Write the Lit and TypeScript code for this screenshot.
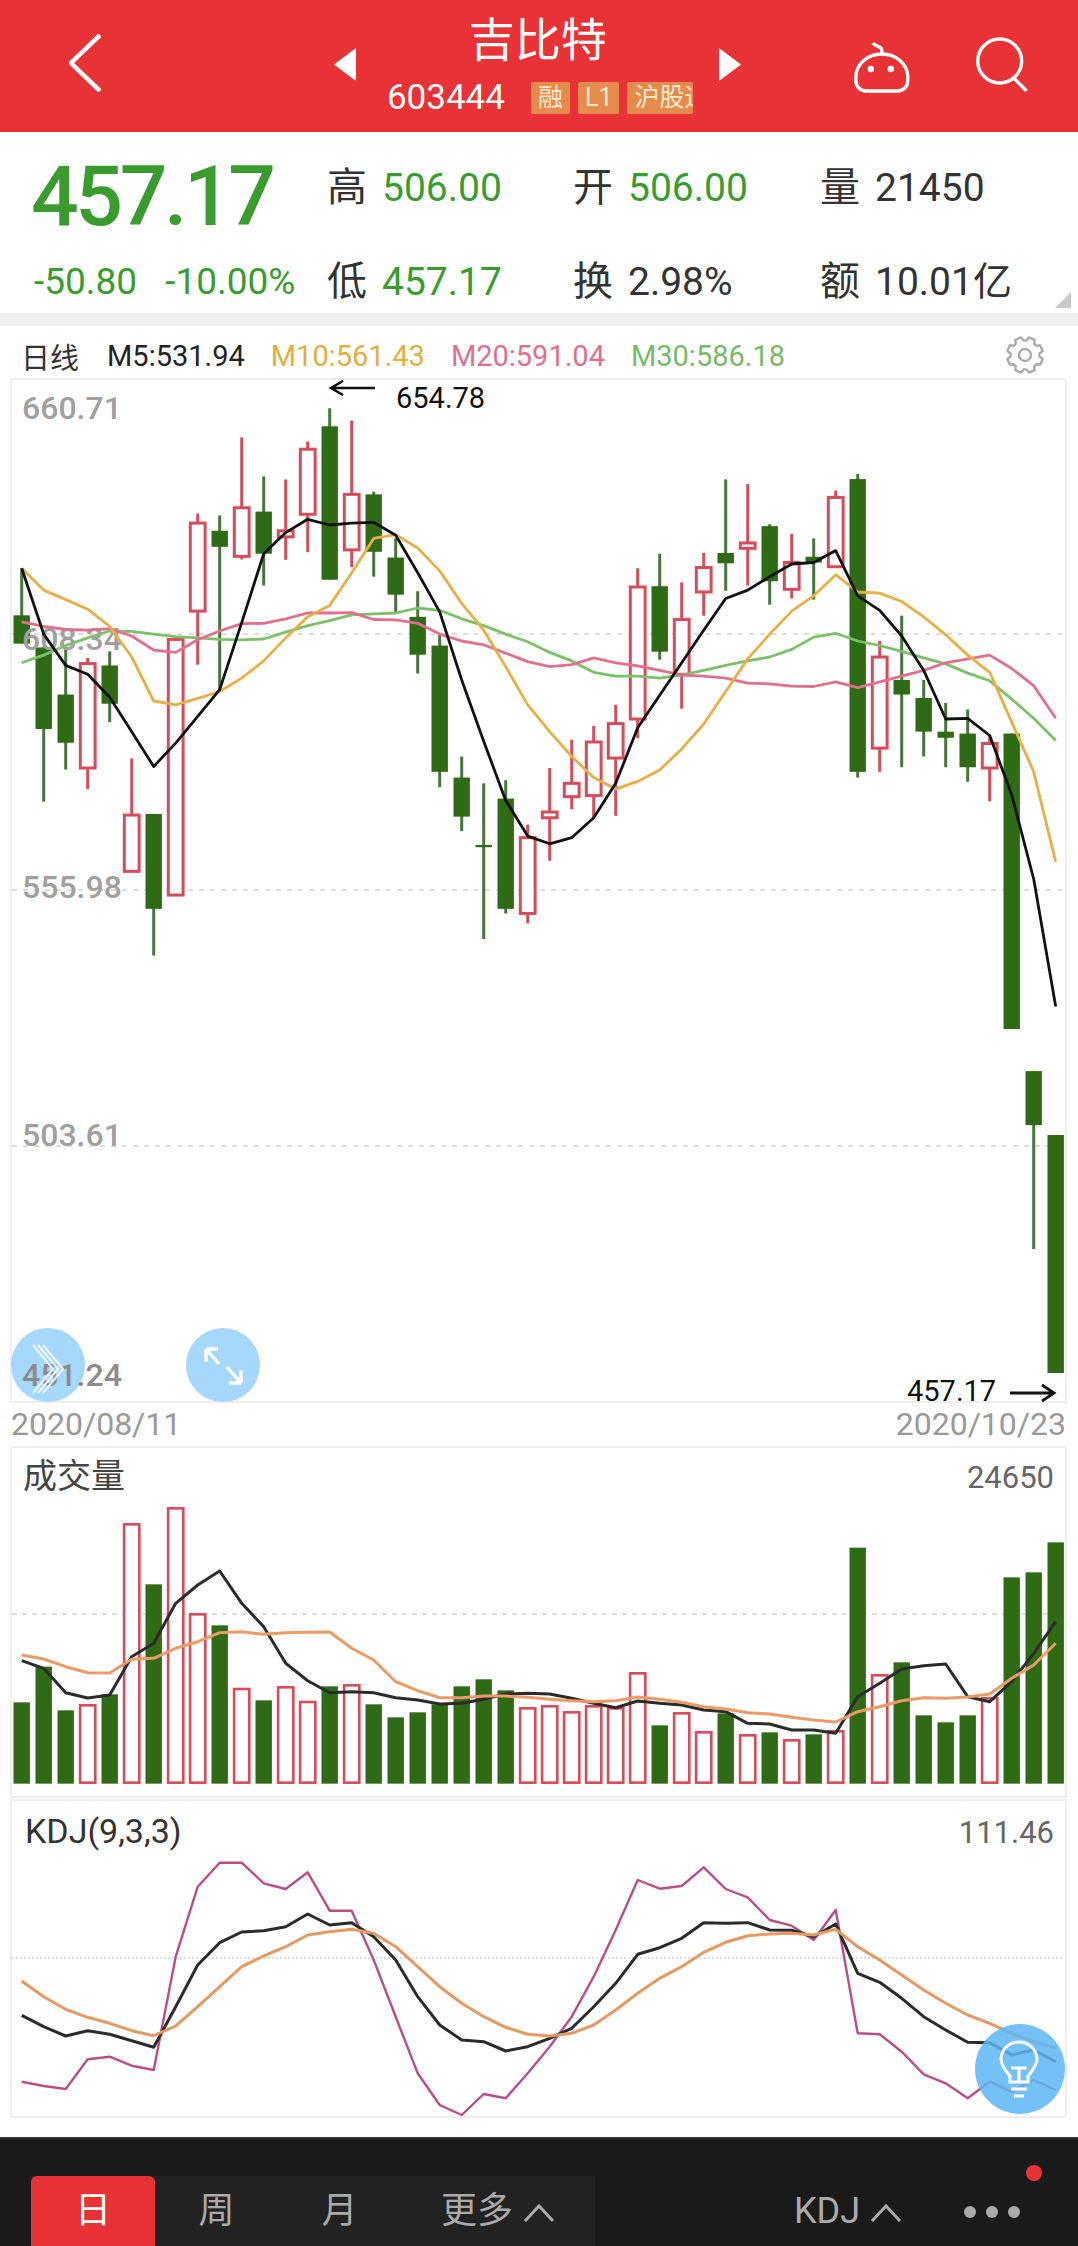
// app.ts - stock candlestick detail screen
import { LitElement, html, css, svg, unsafeCSS } from 'lit';
import { customElement } from 'lit/decorators.js';

const FONT = unsafeCSS(`Roboto, "Noto Sans CJK SC", sans-serif`);

const GREEN = '#2f6a15';
const WICK = '#47753a';
const RED = '#d64c5b';

// candle slot i sits at this page x
const slotX = (i: number) => 21.7 + 22 * i;

// values below were read off the reference, in units of 1/2.613 px from y=370
const py = (v: number) => 370 + v / 2.613;

type Candle = [up: 0 | 1, wickTop: number, top: number, bottom: number, wickBottom: number];

const CANDLES: Candle[] = [
  [0, 518, 641, 715, 715],
  [0, 725, 725, 938, 1128],
  [0, 730, 848, 974, 1044],
  [1, 752, 767, 1040, 1095],
  [0, 735, 772, 872, 920],
  [1, 1015, 1163, 1310, 1310],
  [0, 1160, 1160, 1408, 1530],
  [1, 704, 704, 1372, 1372],
  [1, 375, 400, 630, 770],
  [0, 380, 420, 462, 840],
  [1, 176, 360, 487, 495],
  [0, 278, 370, 480, 563],
  [1, 286, 420, 436, 496],
  [1, 187, 207, 377, 476],
  [0, 100, 147, 548, 548],
  [1, 132, 325, 470, 515],
  [0, 318, 325, 475, 540],
  [0, 440, 490, 587, 633],
  [0, 578, 645, 744, 793],
  [0, 690, 720, 1050, 1090],
  [0, 1010, 1065, 1167, 1205],
  [0, 1080, 1241, 1247, 1487],
  [0, 1072, 1120, 1408, 1420],
  [1, 1188, 1222, 1420, 1446],
  [1, 1040, 1155, 1170, 1282],
  [1, 966, 1080, 1115, 1148],
  [1, 930, 972, 1112, 1170],
  [1, 875, 924, 1014, 1165],
  [1, 518, 567, 912, 962],
  [0, 480, 565, 736, 757],
  [1, 555, 652, 795, 885],
  [1, 478, 516, 580, 642],
  [0, 286, 478, 505, 577],
  [1, 298, 452, 466, 563],
  [0, 403, 408, 552, 613],
  [1, 428, 503, 573, 597],
  [0, 440, 488, 503, 600],
  [1, 315, 333, 514, 514],
  [0, 272, 285, 1050, 1065],
  [1, 708, 750, 988, 1050],
  [0, 642, 810, 848, 1038],
  [0, 810, 857, 945, 1010],
  [0, 870, 945, 961, 1038],
  [0, 887, 950, 1038, 1076],
  [1, 955, 976, 1040, 1127],
  [0, 950, 950, 1722, 1722],
  [0, 1832, 1832, 1973, 2297],
  [0, 1999, 1999, 2621, 2621]
];

const MA5 = [
  518, 690, 772, 795, 855, 945, 1036, 975, 905, 835, 660, 480, 425, 390, 405, 400, 398, 432, 530,
  632, 810, 970, 1125, 1218, 1238, 1222, 1170, 1080, 935, 850, 765, 680, 597, 575, 540, 507, 503,
  472, 590, 628, 695, 785, 912, 910, 955, 1110, 1330, 1663
];
const MA10 = [
  518, 575, 600, 625, 670, 750, 865, 875, 858, 840, 805, 760, 700, 645, 615, 530, 440, 430, 465,
  525, 610, 680, 775, 875, 945, 1010, 1065, 1095, 1075, 1045, 990, 925, 840, 755, 690, 630, 590,
  535, 580, 583, 605, 645, 692, 745, 790, 920, 1050, 1285
];
const MA20 = [
  658, 670, 678, 680, 676, 695, 732, 738, 705, 682, 663, 662, 650, 635, 635, 634, 652, 653, 662,
  690, 708, 718, 740, 762, 775, 770, 752, 765, 773, 785, 797, 800, 805, 818, 820, 826, 827, 815,
  830, 815, 800, 785, 765, 755, 745, 780, 825, 910
];
const MA30 = [
  765, 745, 720, 700, 682, 683, 690, 697, 700, 704, 705, 703, 685, 668, 655, 640, 637, 635, 622,
  628, 650, 668, 690, 710, 738, 760, 790, 800, 800, 805, 797, 785, 772, 760, 750, 730, 698, 688,
  708, 720, 735, 752, 768, 792, 812, 860, 910, 968
];

// volume panel: units of 1/3 px from y=1440
const vy = (v: number) => 1440 + v / 3;

const VOLUME: [0 | 1, number][] = [
  [0, 787], [0, 680], [0, 811], [1, 796], [0, 763], [1, 253], [0, 433], [1, 205],
  [1, 523], [0, 556], [1, 747], [0, 781], [1, 742], [1, 786], [0, 739], [1, 736],
  [0, 793], [0, 832], [0, 817], [0, 793], [0, 739], [0, 718], [0, 751], [1, 805],
  [1, 799], [1, 817], [1, 799], [1, 805], [1, 700], [0, 856], [1, 820], [1, 877],
  [0, 820], [1, 886], [0, 877], [1, 901], [0, 883], [1, 874], [0, 323], [1, 706],
  [0, 667], [0, 826], [0, 847], [0, 826], [1, 775], [0, 412], [0, 397], [0, 307]
];
const VOL_BLACK = [
  662, 685, 758, 774, 765, 650, 610, 490, 435, 393, 490, 560, 670, 722, 758, 755, 758, 773, 780,
  792, 790, 778, 762, 760, 762, 775, 790, 803, 783, 790, 795, 810, 815, 850, 852, 870, 870, 880,
  770, 730, 687, 677, 672, 770, 785, 725, 640, 545
];
const VOL_ORANGE = [
  645, 657, 680, 698, 699, 658, 655, 625, 605, 578, 575, 583, 578, 577, 576, 625, 660, 725, 752,
  773, 773, 768, 768, 772, 778, 782, 785, 782, 771, 778, 787, 800, 807, 818, 822, 832, 840, 846,
  815, 800, 782, 773, 775, 771, 762, 715, 675, 610
];

// KDJ panel: units of 1/3 px from y=1790
const ky = (v: number) => 1790 + v / 3;

const KDJ_K = [
  676, 710, 738, 722, 733, 752, 772, 650, 525, 458, 426, 422, 410, 372, 405, 398, 440, 510, 620,
  705, 750, 755, 783, 770, 745, 715, 650, 580, 493, 473, 445, 398, 400, 398, 420, 421, 440, 402,
  550, 577, 625, 680, 720, 757, 758, 795, 780, 815
];
const KDJ_D = [
  573, 620, 658, 682, 700, 722, 737, 708, 650, 590, 530, 498, 470, 435, 425, 418, 430, 470, 530,
  590, 640, 680, 712, 733, 738, 730, 705, 660, 610, 565, 530, 487, 457, 437, 432, 430, 435, 418,
  470, 510, 555, 600, 640, 675, 700, 730, 755, 775
];
const KDJ_J = [
  875, 888, 897, 808, 800, 827, 840, 500, 290, 218, 218, 280, 297, 247, 362, 362, 510, 680, 850,
  945, 975, 912, 925, 850, 770, 680, 560, 420, 270, 296, 288, 232, 297, 322, 390, 407, 450, 360,
  730, 733, 785, 853, 880, 925, 875, 905, 870, 900
];

const line = (values: number[], map: (v: number) => number, color: string, width = 2.8) =>
  svg`<polyline
    points=${values.map((v, i) => `${slotX(i)},${map(v).toFixed(1)}`).join(' ')}
    fill="none"
    stroke=${color}
    stroke-width=${width}
    stroke-linejoin="round"
  />`;

// eight toothed outline around (19,19)
const gearPath = () => {
  const pts: string[] = [];
  for (let i = 0; i < 8; i++) {
    const a = (i * Math.PI) / 4 + Math.PI / 8;
    for (const [da, r] of [
      [-0.3, 14.5],
      [-0.17, 18],
      [0.17, 18],
      [0.3, 14.5]
    ]) {
      pts.push(`${(19 + r * Math.cos(a + da)).toFixed(1)} ${(19 + r * Math.sin(a + da)).toFixed(1)}`);
    }
  }
  return `M${pts.join('L')}Z`;
};

@customElement('candle-chart')
export class CandleChart extends LitElement {
  static override styles = css`
    :host {
      display: block;
      height: 1025px;
    }
    svg {
      display: block;
      font-family: ${FONT};
    }
    .price {
      font-size: 32px;
      font-weight: 500;
      fill: #a0a0a0;
    }
    .price.low {
      fill: #8c8c8c;
    }
    .mark {
      font-size: 29px;
      fill: #111;
    }
  `;

  private renderCandle(c: Candle, i: number) {
    const [up, wickTop, top, bottom, wickBottom] = c;
    const x = slotX(i);
    const h = Math.max(py(bottom) - py(top), 2);
    const stroke = up ? RED : WICK;
    return svg`
      <line x1=${x} x2=${x} y1=${py(wickTop)} y2=${py(wickBottom)} stroke=${stroke} stroke-width="3" />
      ${up
        ? svg`<rect x=${x - 7.4} y=${py(top)} width="14.8" height=${h} fill="#fff" stroke=${RED} stroke-width="3" />`
        : svg`<rect x=${x - 8.2} y=${py(top)} width="16.4" height=${h} fill=${GREEN} />`}
    `;
  }

  override render() {
    return html`
      <svg width="1078" height="1025" viewBox="0 378 1078 1025">
        <rect x="11" y="379" width="1055" height="1023" fill="#fff" stroke="#eee" stroke-width="2" />
        ${[634, 890, 1146].map(
          y => svg`<line x1="12" x2="1064" y1=${y} y2=${y} stroke="#ddd" stroke-width="2" stroke-dasharray="5 6" />`
        )}
        ${CANDLES.map((c, i) => this.renderCandle(c, i))}
        <text class="price" x="22" y="419">660.71</text>
        <text class="price" x="22" y="650">608.34</text>
        <text class="price" x="22" y="898">555.98</text>
        <text class="price" x="22" y="1146">503.61</text>
        ${line(MA30, py, '#7cc06a')}
        ${line(MA20, py, '#e26f8e')}
        ${line(MA10, py, '#e8b044')}
        ${line(MA5, py, '#111')}
        <path d="M375 388H331M343 381l-12 7 12 7" fill="none" stroke="#111" stroke-width="2.6" />
        <text class="mark" x="396" y="408">654.78</text>
        <text class="mark" x="907" y="1401">457.17</text>
        <path d="M1010 1393H1054M1042 1385l12 8-12 8" fill="none" stroke="#111" stroke-width="2.8" />

        <circle cx="48" cy="1365" r="37" fill="#a6d8fb" />
        <text class="price low" x="22" y="1386">451.24</text>
        <path
          d="M33 1345l20 24-20 24M38 1345l20 24-20 24M43 1345l20 24-20 24"
          fill="none"
          stroke="#fff"
          stroke-opacity="0.85"
          stroke-width="2"
        />
        <circle cx="223" cy="1365" r="37" fill="#a6d8fb" />
        <path
          d="M206 1349l13 15M206 1349v13M206 1349h12M241 1383l-14-16M241 1383v-13M241 1383h-12"
          fill="none"
          stroke="#fff"
          stroke-width="3.4"
        />
      </svg>
    `;
  }
}

@customElement('volume-chart')
export class VolumeChart extends LitElement {
  static override styles = css`
    :host {
      display: block;
      height: 352px;
    }
    svg {
      display: block;
      font-family: ${FONT};
    }
    .title {
      font-size: 34px;
      fill: #444;
    }
    .max {
      font-size: 31px;
      fill: #666;
    }
  `;

  override render() {
    const base = vy(1028);
    return html`
      <svg width="1078" height="352" viewBox="0 1446 1078 352">
        <rect x="11" y="1447" width="1055" height="350" fill="#fff" stroke="#eee" stroke-width="2" />
        <line x1="12" x2="1064" y1="1614" y2="1614" stroke="#ddd" stroke-width="2" stroke-dasharray="5 5" />
        ${VOLUME.map(([up, top], i) => {
          const x = slotX(i);
          const y = vy(top);
          return up
            ? svg`<rect x=${x - 7.6} y=${y} width="15.2" height=${base - y} fill="#fff" stroke=${RED} stroke-width="2.6" />`
            : svg`<rect x=${x - 8.2} y=${y} width="16.4" height=${base - y + 1} fill=${GREEN} />`;
        })}
        ${line(VOL_BLACK, vy, '#2b2b2b', 3)}
        ${line(VOL_ORANGE, vy, '#ec9a68', 3)}
        <text class="title" x="23" y="1488">成交量</text>
        <text class="max" x="1054" y="1488" text-anchor="end">24650</text>
      </svg>
    `;
  }
}

@customElement('kdj-chart')
export class KdjChart extends LitElement {
  static override styles = css`
    :host {
      display: block;
      height: 319px;
    }
    svg {
      display: block;
      font-family: ${FONT};
    }
    .title {
      font-size: 34px;
      fill: #333;
    }
    .max {
      font-size: 31px;
      fill: #666;
    }
  `;

  override render() {
    return html`
      <svg width="1078" height="319" viewBox="0 1799 1078 319">
        <rect x="11" y="1800" width="1055" height="317" fill="#fff" stroke="#eee" stroke-width="2" />
        <line x1="12" x2="1064" y1="1958" y2="1958" stroke="#ddd" stroke-width="2" stroke-dasharray="2 2" />
        ${line(KDJ_J, ky, '#b84f86', 2.4)}
        ${line(KDJ_K, ky, '#2b2b2b', 3)}
        ${line(KDJ_D, ky, '#e59a63', 3)}
        <text class="title" x="25" y="1843">KDJ(9,3,3)</text>
        <text class="max" x="1054" y="1843" text-anchor="end">111.46</text>
        <circle cx="1020" cy="2069" r="45" fill="#5cb6f6" fill-opacity="0.85" />
        <path
          d="M1010 2082v-6C1006 2071 1001 2066 1001 2059a18 17 0 0 1 36 0C1037 2066 1032 2071 1028 2076v6ZM1011 2068h16M1019 2068v14M1011 2089h16M1014 2096h10"
          fill="none"
          stroke="#fff"
          stroke-width="3"
        />
      </svg>
    `;
  }
}

@customElement('app-root')
export class AppRoot extends LitElement {
  static override styles = css`
    :host {
      display: block;
      width: 1078px;
      height: 2246px;
      overflow: hidden;
      background: #fff;
      font-family: ${FONT};
    }

    .header {
      display: flex;
      height: 132px;
      background: #e93235;
      color: #fff;
    }
    .back {
      display: block;
      margin: 34px 233px 0 69px;
    }
    .switch {
      display: block;
      margin-top: 48px;
    }
    .identity {
      width: 364px;
      padding-top: 14px;
      box-sizing: border-box;
    }
    .name {
      font-size: 46px;
      line-height: 52px;
      text-align: center;
    }
    .sub {
      display: flex;
      align-items: center;
      height: 32px;
      margin-top: 16px;
      padding-left: 31px;
    }
    .code {
      width: 144px;
      font-size: 35px;
      line-height: 32px;
    }
    .tag {
      height: 32px;
      margin-right: 8px;
      padding: 0 7px;
      overflow: hidden;
      box-sizing: border-box;
      border-radius: 2px;
      background: #e58b4e;
      color: #fde8cc;
      font-size: 25px;
      line-height: 32px;
      white-space: nowrap;
    }
    .tag.wide {
      width: 66px;
      margin-right: 0;
    }
    .actions {
      display: block;
      margin-left: auto;
    }

    .quote {
      position: relative;
      display: flex;
      padding: 34px 0 9px;
    }
    .headline {
      width: 327px;
      color: #3a9c2f;
    }
    .last {
      margin-top: -2px;
      padding-left: 31px;
      font-size: 84px;
      font-weight: 500;
      line-height: 66px;
      letter-spacing: -3.4px;
    }
    .change {
      display: flex;
      gap: 28px;
      height: 44px;
      margin-top: 30px;
      padding-left: 34px;
      font-size: 37px;
      line-height: 44px;
    }
    .stats {
      display: grid;
      grid-template-columns: 246px 247px 1fr;
      grid-auto-rows: 44px;
      row-gap: 50px;
      flex: 1;
    }
    .stat {
      display: flex;
      gap: 15px;
      color: #333;
      font-size: 39px;
      line-height: 44px;
    }
    .stat b {
      font-size: 40px;
      font-weight: 400;
    }
    .stat .down {
      color: #3a9c2f;
    }
    .corner {
      position: absolute;
      right: 7px;
      bottom: 5px;
      width: 0;
      height: 0;
      border-left: 16px solid transparent;
      border-bottom: 16px solid #c9c9c9;
    }

    .band {
      height: 13px;
      background: #f2f2f2;
    }

    .legend {
      display: flex;
      align-items: center;
      gap: 26px;
      box-sizing: border-box;
      height: 52px;
      padding: 8px 0 0 21px;
      font-size: 29px;
    }
    .legend .period {
      margin-right: 2px;
      color: #333;
    }
    .ma5 {
      color: #222;
    }
    .ma10 {
      color: #e2b03f;
    }
    .ma20 {
      color: #e0708f;
    }
    .ma30 {
      color: #78ba68;
    }
    .gear {
      display: block;
      margin: -2px 34px 0 auto;
    }

    .dates {
      display: flex;
      justify-content: space-between;
      height: 43px;
      padding: 0 12px 0 11px;
      color: #999;
      font-size: 32px;
      line-height: 43px;
    }

    .panel-gap {
      height: 1px;
    }

    .toolbar {
      display: flex;
      position: relative;
      box-sizing: border-box;
      height: 110px;
      margin-top: 19px;
      padding: 37px 0 0 31px;
      border-top: 2px solid #333;
      background: #1a1a1a;
      color: #aaa;
    }
    .tabs {
      display: flex;
      width: 564px;
      height: 71px;
      background: #222;
      font-size: 36px;
      line-height: 71px;
      text-align: center;
    }
    .tab {
      width: 123px;
    }
    .tab.on {
      width: 124px;
      border-radius: 6px 6px 0 0;
      background: #e93235;
      color: #fff;
    }
    .tab.more {
      flex: 1;
    }
    .caret {
      margin-left: 10px;
    }
    .indicator {
      margin-left: 199px;
      font-size: 36px;
      line-height: 71px;
    }
    .dots {
      display: flex;
      gap: 10px;
      align-items: center;
      height: 71px;
      margin-left: 62px;
    }
    .dots i {
      width: 12px;
      height: 12px;
      border-radius: 50%;
      background: #aaa;
    }
    .badge {
      position: absolute;
      left: 1026px;
      top: 26px;
      width: 16px;
      height: 16px;
      border-radius: 50%;
      background: #e93235;
    }
  `;

  private renderStat(label: string, value: string, down = false) {
    return html`<div class="stat">
      <b>${label}</b><span class=${down ? 'down' : ''}>${value}</span>
    </div>`;
  }

  override render() {
    const caret = html`<svg class="caret" width="32" height="20" viewBox="0 0 32 20">
      <path d="M2 18L16 3l14 15" fill="none" stroke="#aaa" stroke-width="3" />
    </svg>`;

    return html`
      <div class="header">
        <svg class="back" width="32" height="58" viewBox="0 0 32 58">
          <path d="M31 1L2 29l29 28" fill="none" stroke="#fff" stroke-width="4.5" />
        </svg>
        <svg class="switch" width="22" height="33" viewBox="0 0 22 33">
          <path d="M22 0V33L0 16.5Z" fill="#fff" />
        </svg>
        <div class="identity">
          <div class="name">吉比特</div>
          <div class="sub">
            <span class="code">603444</span>
            <span class="tag">融</span>
            <span class="tag">L1</span>
            <span class="tag wide">沪股通</span>
          </div>
        </div>
        <svg class="switch" width="22" height="33" viewBox="0 0 22 33">
          <path d="M0 0V33L22 16.5Z" fill="#fff" />
        </svg>
        <svg class="actions" width="337" height="132" viewBox="741 0 337 132">
          <g fill="none" stroke="#fff" stroke-width="3.4">
            <path d="M866 91h32a10 10 0 0 0 10-10v-4a26 23 0 0 0-52 0v4a10 10 0 0 0 10 10Z" />
            <path d="M882 54v-4c0-4-6-3-9-7" />
            <circle cx="1000" cy="61" r="22" />
            <path d="M1014 78l13 13" />
          </g>
          <circle cx="871" cy="69" r="3.2" fill="#fff" />
          <circle cx="891" cy="69" r="3.2" fill="#fff" />
        </svg>
      </div>

      <div class="quote">
        <div class="headline">
          <div class="last">457.17</div>
          <div class="change"><span>-50.80</span><span>-10.00%</span></div>
        </div>
        <div class="stats">
          ${this.renderStat('高', '506.00', true)} ${this.renderStat('开', '506.00', true)}
          ${this.renderStat('量', '21450')} ${this.renderStat('低', '457.17', true)}
          ${this.renderStat('换', '2.98%')} ${this.renderStat('额', '10.01亿')}
        </div>
        <div class="corner"></div>
      </div>
      <div class="band"></div>

      <div class="legend">
        <span class="period">日线</span>
        <span class="ma5">M5:531.94</span>
        <span class="ma10">M10:561.43</span>
        <span class="ma20">M20:591.04</span>
        <span class="ma30">M30:586.18</span>
        <svg class="gear" width="38" height="38" viewBox="0 0 38 38">
          <path d=${gearPath()} fill="none" stroke="#aaa" stroke-width="2.4" stroke-linejoin="round" />
          <circle cx="19" cy="19" r="6" fill="none" stroke="#aaa" stroke-width="2.4" />
        </svg>
      </div>

      <candle-chart></candle-chart>
      <div class="dates"><span>2020/08/11</span><span>2020/10/23</span></div>
      <volume-chart></volume-chart>
      <div class="panel-gap"></div>
      <kdj-chart></kdj-chart>

      <div class="toolbar">
        <div class="tabs">
          <div class="tab on">日</div>
          <div class="tab">周</div>
          <div class="tab">月</div>
          <div class="tab more">更多${caret}</div>
        </div>
        <div class="indicator">KDJ${caret}</div>
        <div class="dots"><i></i><i></i><i></i></div>
        <div class="badge"></div>
      </div>
    `;
  }
}
